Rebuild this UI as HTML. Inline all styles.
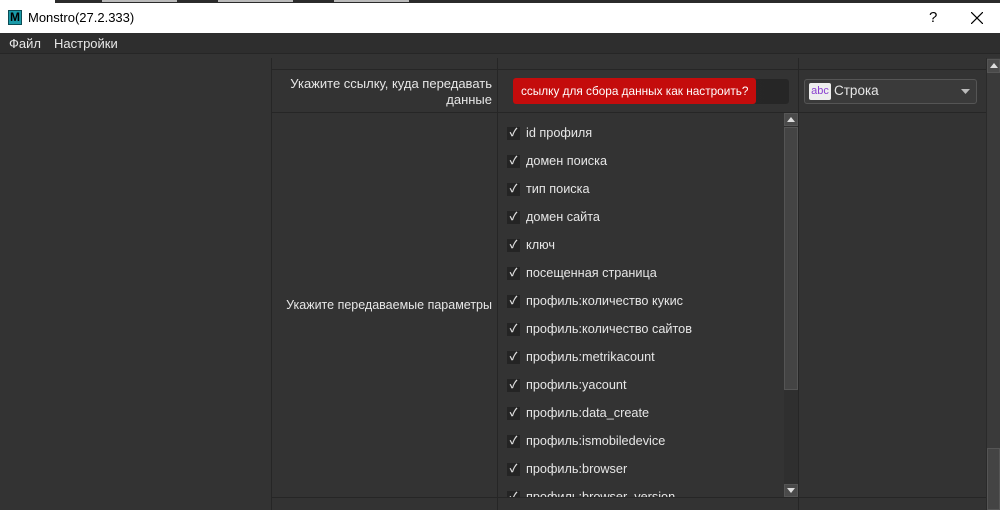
<!DOCTYPE html>
<html><head><meta charset="utf-8"><style>
*{margin:0;padding:0;box-sizing:border-box}
body{width:1000px;height:510px;overflow:hidden;background:#333;font-family:"Liberation Sans","Noto Sans CJK SC",sans-serif;color:#e6e6e6;position:relative}
.a{position:absolute}
</style></head><body>
<div class="a" style="left:0;top:0;width:1000px;height:3px;background:#2b2b2b"></div>
<div class="a" style="left:0;top:0;width:55px;height:3px;background:#fff"></div>
<div class="a" style="left:102px;top:0;width:75px;height:2px;background:#bbb"></div>
<div class="a" style="left:218px;top:0;width:75px;height:2px;background:#bbb"></div>
<div class="a" style="left:334px;top:0;width:75px;height:2px;background:#bbb"></div>
<div class="a" style="left:0;top:3px;width:1000px;height:30px;background:#fff;color:#000;font-size:13px">
<div class="a" style="left:8px;top:7px;width:14px;height:15px;background:#1a9aa8;border:1px solid #0c4c55;color:#000;font-weight:bold;font-size:12px;line-height:13px;text-align:center">M</div>
<div class="a" style="left:28px;top:7px">Monstro(27.2.333)</div>
<div class="a" style="left:929px;top:6px;font-size:15px">?</div>
<svg class="a" style="left:971px;top:9px" width="12" height="12"><path d="M0 0L12 12M12 0L0 12" stroke="#000" stroke-width="1.2"/></svg>
</div>
<div class="a" style="left:0;top:33px;width:1000px;height:20px;background:#2e2e2e;font-size:13px;color:#e8e8e8">
<span class="a" style="left:9px;top:3px">Файл</span><span class="a" style="left:54px;top:3px">Настройки</span></div>
<div class="a" style="left:0;top:53px;width:1000px;height:1px;background:#262626"></div>
<div class="a" style="left:271px;top:58px;width:1px;height:452px;background:#262626"></div>
<div class="a" style="left:497px;top:58px;width:1px;height:452px;background:#262626"></div>
<div class="a" style="left:798px;top:58px;width:1px;height:452px;background:#262626"></div>
<div class="a" style="left:272px;top:69px;width:715px;height:1px;background:#262626"></div>
<div class="a" style="left:272px;top:112px;width:715px;height:1px;background:#262626"></div>
<div class="a" style="left:272px;top:497px;width:715px;height:1px;background:#262626"></div>
<div class="a" style="left:986px;top:58px;width:14px;height:452px;background:#3a3a3a;border-left:1px solid #2a2a2a"></div>
<div class="a" style="left:987px;top:59px;width:13px;height:14px;background:#4a4a4a;border:1px solid #555"></div>
<svg class="a" style="left:990px;top:63px" width="8" height="5"><path d="M0 5L4 0L8 5Z" fill="#ddd"/></svg>
<div class="a" style="left:987px;top:448px;width:13px;height:62px;background:#444;border:1px solid #555"></div>
<div class="a" style="left:272px;top:76px;width:220px;text-align:right;font-size:13px;line-height:16px">Укажите ссылку, куда передавать<br>данные</div>
<div class="a" style="left:513px;top:79px;width:276px;height:25px;background:linear-gradient(90deg,#2c2c2c,#262626);border-radius:3px"></div>
<div class="a" style="left:513px;top:78px;width:243px;height:26px;background:#c40c0c;border-radius:3px;font-size:11.8px;color:#fff;line-height:26px;padding-left:8px;white-space:nowrap;overflow:hidden">ссылку для сбора данных как настроить?</div>
<div class="a" style="left:804px;top:79px;width:173px;height:25px;background:#3a3a3a;border:1px solid #555;border-radius:3px"></div>
<div class="a" style="left:809px;top:83px;width:22px;height:17px;background:#eee;border-radius:2px;color:#8a3fd0;font-size:11px;line-height:17px;text-align:center">abc</div>
<div class="a" style="left:834px;top:83px;font-size:13.5px">Строка</div>
<svg class="a" style="left:961px;top:89px" width="9" height="5"><path d="M0 0L9 0L4.5 5Z" fill="#bbb"/></svg>
<div class="a" style="left:272px;top:298px;width:220px;text-align:right;font-size:12.5px">Укажите передаваемые параметры</div>
<div class="a" style="left:498px;top:113px;width:286px;height:384px;overflow:hidden;font-size:12.7px">
<div style="position:relative;top:13px">
<style>.r{height:28px;position:relative}.r i{position:absolute;left:9px;top:1px;width:13px;height:13px;background:#242424;font-style:normal;font-size:11px;line-height:13px;text-align:center;color:#ddd;font-weight:bold}.r span{position:absolute;left:28px;top:0}</style>
<div class="r"><i>✓</i><span>id профиля</span></div>
<div class="r"><i>✓</i><span>домен поиска</span></div>
<div class="r"><i>✓</i><span>тип поиска</span></div>
<div class="r"><i>✓</i><span>домен сайта</span></div>
<div class="r"><i>✓</i><span>ключ</span></div>
<div class="r"><i>✓</i><span>посещенная страница</span></div>
<div class="r"><i>✓</i><span>профиль:количество кукис</span></div>
<div class="r"><i>✓</i><span>профиль:количество сайтов</span></div>
<div class="r"><i>✓</i><span>профиль:metrikacount</span></div>
<div class="r"><i>✓</i><span>профиль:yacount</span></div>
<div class="r"><i>✓</i><span>профиль:data_create</span></div>
<div class="r"><i>✓</i><span>профиль:ismobiledevice</span></div>
<div class="r"><i>✓</i><span>профиль:browser</span></div>
<div class="r"><i>✓</i><span>профиль:browser_version</span></div>
</div></div>
<div class="a" style="left:784px;top:113px;width:14px;height:384px;background:#2f2f2f"></div>
<div class="a" style="left:784px;top:113px;width:14px;height:13px;background:#4a4a4a;border:1px solid #555"></div>
<svg class="a" style="left:787px;top:117px" width="8" height="5"><path d="M0 5L4 0L8 5Z" fill="#ddd"/></svg>
<div class="a" style="left:784px;top:127px;width:14px;height:263px;background:#444;border:1px solid #555"></div>
<div class="a" style="left:784px;top:484px;width:14px;height:13px;background:#4a4a4a;border:1px solid #555"></div>
<svg class="a" style="left:787px;top:488px" width="8" height="5"><path d="M0 0L8 0L4 5Z" fill="#ddd"/></svg>
</body></html>
